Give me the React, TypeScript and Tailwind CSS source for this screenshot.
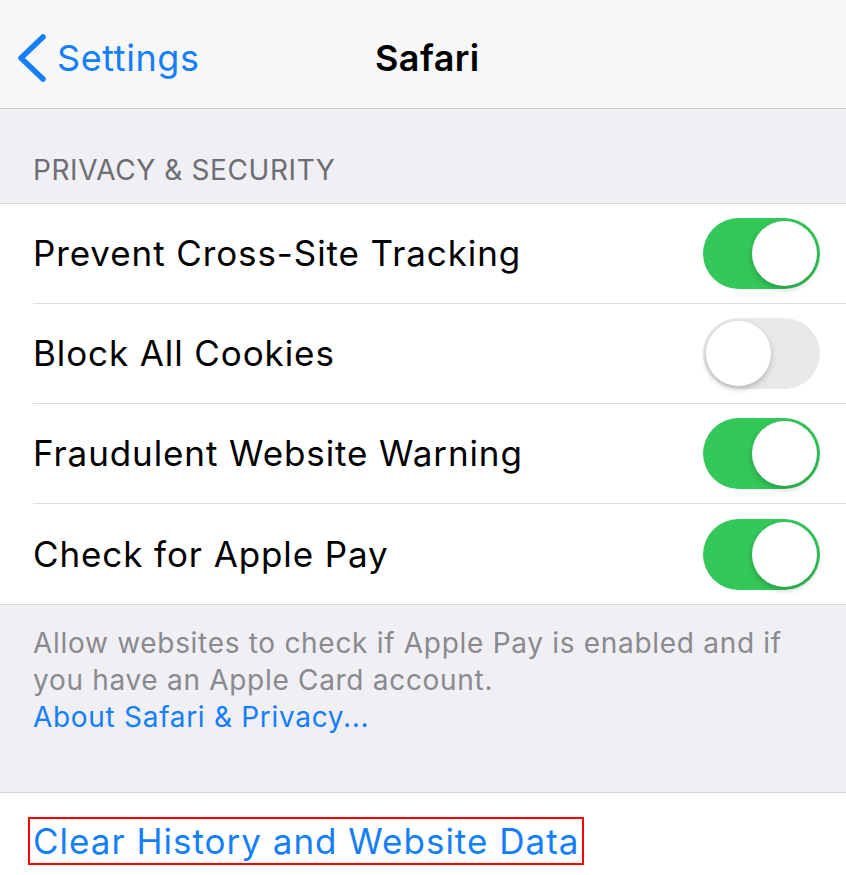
import { ReactNode } from "react";

const font = { fontFamily: "Inter, 'Noto Sans', sans-serif" };

function Toggle({ on }: { on: boolean }) {
  return (
    <div
      className={`relative h-[71px] w-[117px] rounded-full ${
        on ? "bg-[#34c759]" : "bg-[#e9e9eb]"
      }`}
    >
      <div
        className={`absolute top-[3px] h-[65px] w-[65px] rounded-full bg-white shadow-[0_3px_6px_rgba(0,0,0,0.22)] ${
          on ? "right-[3px]" : "left-[3px]"
        }`}
      />
    </div>
  );
}

function Row({ label, on, last }: { label: string; on: boolean; last?: boolean }) {
  return (
    <div className="pl-[33px]">
      <div
        className={`flex h-[100px] items-center justify-between pr-[26px] ${
          last ? "" : "border-b border-[#dcdce0]"
        }`}
      >
        <span className="text-[35px] tracking-[0.9px] text-black">{label}</span>
        <Toggle on={on} />
      </div>
    </div>
  );
}

function Section({ children }: { children: ReactNode }) {
  return <div className="border-y border-[#d6d6da] bg-white">{children}</div>;
}

export default function App() {
  return (
    <div style={font} className="h-[875px] w-[846px] overflow-hidden bg-[#efeff4]">
      <header className="relative flex h-[109px] items-center border-b border-[#cfcfd3] bg-[#f7f7f7] pt-[8px]">
        <div className="flex items-center pl-[17px] text-[#147efb]">
          <svg width="30" height="48" viewBox="0 0 30 48" fill="none">
            <path
              d="M26 3 L4 24 L26 45"
              stroke="#147efb"
              strokeWidth="5.5"
              strokeLinecap="round"
              strokeLinejoin="round"
            />
          </svg>
          <span className="ml-[10px] text-[36px] tracking-[0.6px]">Settings</span>
        </div>
        <h1 className="absolute left-[375px] text-[36px] font-semibold tracking-[0.4px] text-black">
          Safari
        </h1>
      </header>

      <div className="flex h-[94px] items-end pb-[12px] pl-[33px]">
        <span className="text-[28px] tracking-[0.6px] text-[#6d6d72]">PRIVACY &amp; SECURITY</span>
      </div>

      <Section>
        <Row label="Prevent Cross-Site Tracking" on />
        <Row label="Block All Cookies" on={false} />
        <Row label="Fraudulent Website Warning" on />
        <Row label="Check for Apple Pay" on last />
      </Section>

      <div className="h-[187px] pl-[33px] pr-[50px] pt-[20px] text-[28px] leading-[37px] tracking-[0.7px] text-[#8a8a8e]">
        <p>Allow websites to check if Apple Pay is enabled and if you have an Apple Card account.</p>
        <p className="text-[#147efb]">About Safari &amp; Privacy...</p>
      </div>

      <div className="h-[90px] border-t border-[#d6d6da] bg-white pl-[28px] pt-[24px]">
        <span className="inline-block border-2 border-[#ff0000] px-[3px] text-[35px] leading-[44px] tracking-[1px] text-[#147efb]">
          Clear History and Website Data
        </span>
      </div>
    </div>
  );
}
